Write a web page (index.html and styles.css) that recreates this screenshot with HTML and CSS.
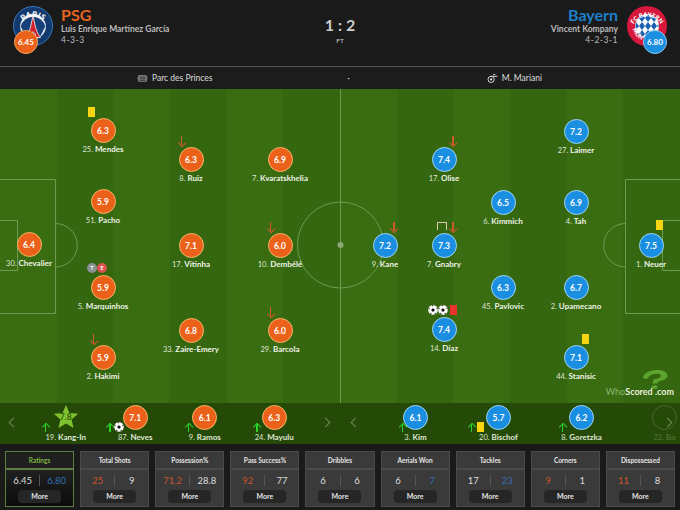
FILE: index.html
```html
<!DOCTYPE html>
<html lang="en">
<head>
<meta charset="utf-8">
<title>PSG 1 : 2 Bayern</title>
<link rel="stylesheet" href="styles.css">
</head>
<body>
<header class="match-head">
  <div class="team">
    <div class="crest">
      <svg viewBox="0 0 40 40" width="40" height="40">
        <defs><path id="psg-arc" d="M5.500 23A14.700 14.700 0 0 1 34.500 23"/></defs>
        <circle cx="20" cy="20" r="19.500" fill="#123a6e" stroke="#3a78b8"/>
        <circle cx="20" cy="20.500" r="12.500" fill="#f1f3f6" stroke="#cfd8e4"/>
        <path d="M7.800 20.500A12.500 12.500 0 0 1 32.200 20.500L27 31H13Z" fill="#16407a"/>
        <path d="M20 9.500L22 19C23 24 25 28 27.500 31.500H23C22.500 28 21.500 26 20 26S17.500 28 17 31.500H12.500C15 28 17 24 18 19Z" fill="#d2202f" stroke="#f4f4f4" stroke-width=".8"/>
        <text class="crest-text psg-text"><textPath href="#psg-arc" startOffset="50%">PARIS</textPath></text>
      </svg>
      <span class="team-rating home-bg home-rating">6.45</span>
    </div>
    <div class="team-info">
      <div class="team-name home-text">PSG</div>
      <div class="manager">Luis Enrique Martínez García</div>
      <div class="formation">4-3-3</div>
    </div>
  </div>
  <div class="score">
    <div class="score-value">1 : 2</div>
    <div class="score-state">FT</div>
  </div>
  <div class="team team-away">
    <div class="team-info info-away">
      <div class="team-name away-text">Bayern</div>
      <div class="manager">Vincent Kompany</div>
      <div class="formation">4-2-3-1</div>
    </div>
    <div class="crest">
      <svg viewBox="0 0 40 40" width="40" height="40">
        <defs>
          <path id="fcb-arc" d="M4.800 23A15.500 15.500 0 0 1 35.200 23"/>
          <path id="fcb-arc2" d="M5.500 22A15 15 0 0 0 20 35"/>
          <pattern id="lozenge" width="6" height="8" patternUnits="userSpaceOnUse">
            <rect width="6" height="8" fill="#fff"/>
            <path d="M3 0L6 4L3 8L0 4Z" fill="#1b5fb3"/>
          </pattern>
          <clipPath id="fcb-clip"><circle cx="20" cy="20" r="11.500"/></clipPath>
        </defs>
        <circle cx="20" cy="20" r="20" fill="#d7183c"/>
        <circle cx="20" cy="20" r="12" fill="#fff"/>
        <rect x="8" y="8" width="24" height="24" fill="url(#lozenge)" clip-path="url(#fcb-clip)"/>
        <text class="crest-text fcb-text"><textPath href="#fcb-arc" startOffset="50%">FC BAYERN</textPath></text>
        <text class="crest-text fcb-text"><textPath href="#fcb-arc2" startOffset="40%">MÜN</textPath></text>
      </svg>
      <span class="team-rating away-bg away-rating">6.80</span>
    </div>
  </div>
</header>

<div class="info-bar">
  <div class="info-item">
    <svg class="info-icon" viewBox="0 0 16 12" width="11" height="9"><rect x="1" y="1" width="14" height="10" rx="3" fill="#777"/><path d="M4 4h8M4 6.500h8M4 9h8" stroke="#222"/></svg>
    <span>Parc des Princes</span>
  </div>
  <span class="info-dot">·</span>
  <div class="info-item">
    <svg class="info-icon" viewBox="0 0 16 14" width="11" height="10"><circle cx="6" cy="9" r="4.500" fill="none" stroke="#ddd" stroke-width="1.400"/><circle cx="6" cy="9" r="1.600" fill="#ddd"/><path d="M6 4.500H15M9 2h3" stroke="#ddd" stroke-width="1.400"/></svg>
    <span>M. Mariani</span>
  </div>
</div>

<main class="pitch">
  <svg class="markings" viewBox="0 0 680 314" width="680" height="314">
    <g fill="none" stroke="#6f9a52" stroke-width="1">
      <path d="M340.500 0V314"/>
      <circle cx="340.500" cy="156" r="43"/>
      <path d="M0 90.500H55.500V224.500H0M0 131.500H17.500V181.500H0"/>
      <path d="M55.500 134.500A21.750 21.750 0 0 1 55.500 178"/>
      <path d="M680 90.500H625.500V224.500H680M680 131.500H662.500V181.500H680"/>
      <path d="M625.500 134.500A21.750 21.750 0 0 0 625.500 178"/>
    </g>
    <circle cx="340.500" cy="156" r="3" fill="#8aa873"/>
  </svg>

  <div class="player pl-1"><span class="card yellow card-top"></span><span class="bubble home-bg">6.3</span><span class="pname"><small>25.</small> Mendes</span></div>
  <div class="player pl-2"><span class="bubble home-bg">5.9</span><span class="pname"><small>51.</small> Pacho</span></div>
  <div class="player pl-3"><span class="bubble home-bg">6.4</span><span class="pname"><small>30.</small> Chevalier</span></div>
  <div class="player pl-4"><span class="badges"><i class="badge grey">T</i><i class="badge red">E</i></span><span class="bubble home-bg">5.9</span><span class="pname"><small>5.</small> Marquinhos</span></div>
  <div class="player pl-5"><span class="arrow-down arrow-top"></span><span class="bubble home-bg">5.9</span><span class="pname"><small>2.</small> Hakimi</span></div>
  <div class="player pl-6"><span class="arrow-down arrow-top"></span><span class="bubble home-bg">6.3</span><span class="pname"><small>8.</small> Ruiz</span></div>
  <div class="player pl-7"><span class="bubble home-bg">7.1</span><span class="pname"><small>17.</small> Vitinha</span></div>
  <div class="player pl-8"><span class="bubble home-bg">6.8</span><span class="pname"><small>33.</small> Zaire-Emery</span></div>
  <div class="player pl-9"><span class="bubble home-bg">6.9</span><span class="pname"><small>7.</small> Kvaratskhelia</span></div>
  <div class="player pl-10"><span class="arrow-down arrow-top"></span><span class="bubble home-bg">6.0</span><span class="pname"><small>10.</small> Dembélé</span></div>
  <div class="player pl-11"><span class="arrow-down arrow-top"></span><span class="bubble home-bg">6.0</span><span class="pname"><small>29.</small> Barcola</span></div>

  <div class="player pl-12"><span class="arrow-down arrow-top arrow-right"></span><span class="bubble away-bg">7.2</span><span class="pname"><small>9.</small> Kane</span></div>
  <div class="player pl-13"><span class="post"></span><span class="arrow-down arrow-top arrow-right"></span><span class="bubble away-bg">7.3</span><span class="pname"><small>7.</small> Gnabry</span></div>
  <div class="player pl-14"><span class="arrow-down arrow-top arrow-right"></span><span class="bubble away-bg">7.4</span><span class="pname"><small>17.</small> Olise</span></div>
  <div class="player pl-15"><span class="events"><svg class="ball" viewBox="0 0 10 10" width="10" height="10"><use href="#ball"/></svg><svg class="ball" viewBox="0 0 10 10" width="10" height="10"><use href="#ball"/></svg><span class="card red-card"></span></span><span class="bubble away-bg">7.4</span><span class="pname"><small>14.</small> Díaz</span></div>
  <div class="player pl-16"><span class="bubble away-bg">6.5</span><span class="pname"><small>6.</small> Kimmich</span></div>
  <div class="player pl-17"><span class="bubble away-bg">6.3</span><span class="pname"><small>45.</small> Pavlovic</span></div>
  <div class="player pl-18"><span class="bubble away-bg">7.2</span><span class="pname"><small>27.</small> Laimer</span></div>
  <div class="player pl-19"><span class="bubble away-bg">6.9</span><span class="pname"><small>4.</small> Tah</span></div>
  <div class="player pl-20"><span class="bubble away-bg">6.7</span><span class="pname"><small>2.</small> Upamecano</span></div>
  <div class="player pl-21"><span class="card yellow card-top card-top-right"></span><span class="bubble away-bg">7.1</span><span class="pname"><small>44.</small> Stanisic</span></div>
  <div class="player pl-22"><span class="card yellow card-right"></span><span class="bubble away-bg">7.5</span><span class="pname"><small>1.</small> Neuer</span></div>

  <div class="watermark">
    <svg class="wm-q" viewBox="0 0 26 19" width="26" height="19"><path d="M1 7C3 2 9 0 15 0C21 0 25.500 2 25.500 5.500C25.500 9 21 10.500 16.500 11.500L15 13.500H10.500L11.500 9.500C15 9 19 8 19 5.800C19 4 16.500 3.500 14 3.800C10 4.200 7 6 5.500 8.500C3 9 .5 8.500 1 7Z" fill="#5fa32f"/><ellipse cx="12.500" cy="17" rx="3" ry="1.800" fill="#5fa32f"/></svg>
    <span class="wm-text"><span class="wm-who">Who</span>Scored .com</span>
  </div>
</main>

<svg class="defs" width="0" height="0"><defs>
  <g id="ball"><circle cx="5" cy="5" r="4.800" fill="#fff"/><path d="M5 3.200l1.700 1.200-.6 2H3.900l-.6-2z" fill="#111"/><path d="M5 .3V1.600L3.500.6zM9.600 3.700L8.300 4.200 8.700 2.500zM.4 3.700L1.700 4.200 1.300 2.500zM2 8.700l.8-1.300 1 1.900zM8 8.700l-.8-1.300-1 1.900z" fill="#111"/></g>
</defs></svg>

<section class="subs">
  <span class="chev chev-left"></span>
  <div class="sub-group sub-home">
    <div class="sub"><span class="up up-star"></span><svg class="star" viewBox="0 0 26 26" width="26" height="26"><path d="M13 0l3.600 8.400 9 .8-6.800 6 2 8.800L13 19.300 5.200 24l2-8.800-6.800-6 9-.8z" fill="#7fc32e"/></svg><span class="star-val">7.8</span><span class="sub-name"><small>19.</small> Kang-In</span></div>
    <div class="sub"><span class="up up-ball"></span><svg class="ball sub-ball" viewBox="0 0 10 10" width="10" height="10"><use href="#ball"/></svg><span class="bubble home-bg">7.1</span><span class="sub-name"><small>87.</small> Neves</span></div>
    <div class="sub"><span class="up up-ramos"></span><span class="bubble home-bg">6.1</span><span class="sub-name"><small>9.</small> Ramos</span></div>
    <div class="sub"><span class="up up-mayulu"></span><span class="bubble home-bg">6.3</span><span class="sub-name"><small>24.</small> Mayulu</span></div>
  </div>
  <span class="chev chev-right"></span>
  <span class="chev chev-left chev-mid"></span>
  <div class="sub-group sub-away">
    <div class="sub"><span class="up up-kim"></span><span class="bubble away-bg">6.1</span><span class="sub-name"><small>3.</small> Kim</span></div>
    <div class="sub"><span class="up up-card"></span><span class="card yellow sub-card"></span><span class="bubble away-bg">5.7</span><span class="sub-name"><small>20.</small> Bischof</span></div>
    <div class="sub"><span class="up up-gor"></span><span class="bubble away-bg">6.2</span><span class="sub-name"><small>8.</small> Goretzka</span></div>
    <div class="sub sub-faded"><span class="bubble ghost"></span><span class="sub-name"><small>22.</small> Bo</span></div>
  </div>
  <span class="chev chev-right chev-end"></span>
</section>

<section class="stats">
  <div class="stat stat-active"><h3>Ratings</h3><div class="vals"><span>6.45</span><span class="away-text">6.80</span></div><button class="more">More</button></div>
  <div class="stat"><h3>Total Shots</h3><div class="vals"><span class="home-text">25</span><span>9</span></div><button class="more">More</button></div>
  <div class="stat"><h3>Possession%</h3><div class="vals"><span class="home-text">71.2</span><span>28.8</span></div><button class="more">More</button></div>
  <div class="stat"><h3>Pass Success%</h3><div class="vals"><span class="home-text">92</span><span>77</span></div><button class="more">More</button></div>
  <div class="stat"><h3>Dribbles</h3><div class="vals"><span>6</span><span>6</span></div><button class="more">More</button></div>
  <div class="stat"><h3>Aerials Won</h3><div class="vals"><span>6</span><span class="away-text">7</span></div><button class="more">More</button></div>
  <div class="stat"><h3>Tackles</h3><div class="vals"><span>17</span><span class="away-text">23</span></div><button class="more">More</button></div>
  <div class="stat"><h3>Corners</h3><div class="vals"><span class="home-text">9</span><span>1</span></div><button class="more">More</button></div>
  <div class="stat"><h3>Dispossessed</h3><div class="vals"><span class="home-text">11</span><span>8</span></div><button class="more">More</button></div>
</section>
</body>
</html>
```
FILE: styles.css
```css
* { box-sizing: border-box; }
html, body { margin: 0; padding: 0; }
body {
  width: 680px; height: 510px; overflow: hidden;
  background: #1a1a1a; color: #ddd;
  font-family: Lato, "Open Sans", sans-serif;
}
.home-text { color: #e8641f; }
.away-text { color: #1c7fc9; }
.home-bg { background: #ec6119; }
.away-bg { background: #1a8ee0; }

/* header */
.match-head {
  height: 67px; padding: 5px 13px 0;
  display: flex; justify-content: space-between; align-items: flex-start;
  border-bottom: 1px solid #555; position: relative;
}
.team { display: flex; gap: 8px; width: 200px; }
.team-away { justify-content: flex-end; gap: 9px; }
.crest { position: relative; width: 40px; height: 40px; flex: none; margin-top: 1px; }
.crest-text { fill: #fff; text-anchor: middle; font-weight: 900; }
.psg-text { font-size: 7.500px; letter-spacing: .3px; }
.fcb-text { font-size: 6px; }
.team-rating {
  position: absolute; width: 24px; height: 24px; border-radius: 50%;
  border: 1px solid #eaa05e; color: #fff; font-size: 8px; font-weight: 700;
  display: flex; align-items: center; justify-content: center;
}
.home-rating { left: 1px; top: 24px; }
.away-rating { right: 0; top: 24px; border-color: #8cc8ee; }
.team-info { font-size: 8.500px; color: #bbb; font-weight: 700; }
.info-away { text-align: right; }
.team-name { font-size: 16px; font-weight: 700; line-height: 20px; }
.manager { line-height: 11px; margin-top: -1px; }
.formation { line-height: 11px; font-weight: 400; letter-spacing: .5px; }
.score { text-align: center; padding-top: 10px; }
.score-value { font-size: 16px; font-weight: 700; line-height: 20px; color: #ccc; }
.score-state { font-size: 6.500px; line-height: 9px; margin-top: 1px; color: #ccc; }

/* venue */
.info-bar {
  height: 22px; display: flex; align-items: center; padding-left: 137px;
  font-size: 8.500px; color: #ddd; background: #1c1c1c;
}
.info-item { display: flex; align-items: center; gap: 4px; }
.info-dot { margin-left: 135px; margin-right: 137px; }

/* pitch */
.pitch {
  position: relative; height: 314px; overflow: hidden;
  background: repeating-linear-gradient(90deg, #3a6c12 0 56.670px, #356610 56.670px 113.340px);
}
.markings { position: absolute; left: 0; top: 0; }
.player {
  position: absolute; width: 80px; margin-left: -40px;
  display: flex; flex-direction: column; align-items: center;
}
.pl-1 { left: 103px; top: 29px; }
.pl-2 { left: 103px; top: 100px; }
.pl-3 { left: 29px; top: 143px; }
.pl-4 { left: 103px; top: 186px; }
.pl-5 { left: 103px; top: 256px; }
.pl-6 { left: 191px; top: 58px; }
.pl-7 { left: 191px; top: 144px; }
.pl-8 { left: 191px; top: 229px; }
.pl-9 { left: 280px; top: 58px; }
.pl-10 { left: 280px; top: 144px; }
.pl-11 { left: 280px; top: 229px; }
.pl-12 { left: 385px; top: 144px; }
.pl-13 { left: 444px; top: 144px; }
.pl-14 { left: 444px; top: 58px; }
.pl-15 { left: 444px; top: 228px; }
.pl-16 { left: 503px; top: 101px; }
.pl-17 { left: 503px; top: 186px; }
.pl-18 { left: 576px; top: 30px; }
.pl-19 { left: 576px; top: 101px; }
.pl-20 { left: 576px; top: 186px; }
.pl-21 { left: 576px; top: 256px; }
.pl-22 { left: 651px; top: 144px; }
.bubble {
  width: 25px; height: 25px; border-radius: 50%;
  border: 1px solid #f2b767; color: #fff; font-size: 8.500px; font-weight: 700;
  display: flex; align-items: center; justify-content: center; flex: none;
}
.away-bg.bubble { border-color: #9fd6f5; }
.pname {
  font-size: 8px; line-height: 11px; margin-top: 1px; color: #eef3e6;
  font-weight: 700; white-space: nowrap;
}
.pname small, .sub-name small { font-size: 7.500px; font-weight: 400; color: #dfe6d4; }
.card { position: absolute; width: 7px; height: 10px; }
.yellow { background: #f7d512; }
.card-top { top: -11px; left: 25px; }
.card-top-right { left: 46px; }
.card-right { top: -13px; left: 45px; }
.red-card { position: static; display: block; background: #e8342c; width: 7px; height: 10px; margin-left: 2px; }
.arrow-down { position: absolute; width: 7px; height: 10px; }
.arrow-down::before {
  content: ""; position: absolute; left: 2.700px; top: 0; width: 1.600px; height: 9px; background: #cf5a2a;
}
.arrow-down::after {
  content: ""; position: absolute; left: .8px; top: 4px; width: 5.400px; height: 5.400px;
  border-right: 1.300px solid #cf5a2a; border-bottom: 1.300px solid #cf5a2a; transform: rotate(45deg);
}
.arrow-top { top: -11px; left: 27px; }
.arrow-right { left: 45.500px; }
.post {
  position: absolute; top: -11px; left: 33px; width: 10px; height: 8px;
  border: 1.500px solid #d8c8b0; border-bottom: 0;
}
.badges { position: absolute; top: -12px; left: 24px; display: flex; gap: 0; }
.badge {
  width: 10px; height: 10px; border-radius: 50%; font-style: normal; color: #fff;
  font-size: 5.500px; font-weight: 700; display: flex; align-items: center; justify-content: center;
}
.grey { background: #8a8f90; }
.red { background: #d9534f; }
.events { position: absolute; top: -12px; left: 24px; display: flex; align-items: center; gap: 0; }
.ball { display: block; }
.watermark { position: absolute; right: 6px; bottom: 6px; width: 68px; height: 27px; text-align: right; }
.wm-q { position: absolute; right: 6px; top: 0; }
.wm-text { position: absolute; right: 0; bottom: 0; font-size: 9px; line-height: 11px; color: #e8f0dc; font-weight: 700; white-space: nowrap; }
.wm-who { color: #8fb86f; font-weight: 400; }

/* subs */
.subs {
  height: 41px; display: flex; align-items: flex-start; overflow: hidden;
  background: #254a07; position: relative; padding-left: 31px;
}
.sub-group { display: flex; flex: none; }
.sub-home { width: 278px; }
.sub-away { width: 332px; margin-left: 65px; }
.sub-home .sub { width: 69.500px; }
.sub-away .sub { width: 83px; }
.sub {
  position: relative; display: flex; flex-direction: column; align-items: center;
  padding-top: 2px; flex: none;
}
.sub-name {
  font-size: 8px; line-height: 11px; margin-top: 2px; white-space: nowrap; color: #dfe6d4; font-weight: 700;
}
.star { display: block; height: 25px; }
.star-val { position: absolute; top: 9px; font-size: 8.500px; font-weight: 700; color: #35610f; }
.up { position: absolute; left: 10px; top: 20px; width: 7px; height: 9px; }
.up::before { content: ""; position: absolute; left: 2.700px; top: 1px; width: 1.600px; height: 8px; background: #2bd42b; }
.up::after {
  content: ""; position: absolute; left: .8px; top: 1px; width: 5.400px; height: 5.400px;
  border-left: 1.300px solid #2bd42b; border-top: 1.300px solid #2bd42b; transform: rotate(45deg);
}
.up-star { left: 11px; }
.up-ball { left: 6px; }
.sub-ball { position: absolute; left: 13px; top: 19px; }
.up-ramos { left: 15px; }
.up-mayulu { left: 14px; }
.sub-away .up-kim { left: 25px; }
.sub-away .up-card { left: 11px; }
.sub-away .up-gor { left: 19px; }
.sub-card { left: 20px; top: 19px; }
.sub-faded { opacity: .22; }
.ghost { background: transparent; border-color: #ccc; }
.chev { position: absolute; width: 7px; height: 7px; top: 16px; border-left: 1.500px solid #6f8a58; border-bottom: 1.500px solid #6f8a58; }
.chev-left { left: 10px; transform: rotate(45deg); }
.chev-right { left: 322px; transform: rotate(225deg); }
.chev-mid { left: 352px; }
.chev-end { left: 664px; }

/* stats */
.stats {
  height: 66px; padding: 7px 5px 3px;
  display: grid; grid-template-columns: repeat(9, 1fr); column-gap: 6px;
}
.stats .home-text { color: #c9542a; }
.stats .away-text { color: #2f6fb5; }
.stat {
  background: #3a3a3a; border: 1px solid #4a4a4a;
  display: flex; flex-direction: column; align-items: center;
}
.stat h3 {
  margin: 0; width: 100%; height: 18px; font-size: 6.500px; line-height: 17px;
  text-align: center; font-weight: 700; color: #e4e4e4; border-bottom: 2px solid #4a4a4a;
}
.vals { display: flex; width: 100%; height: 20px; align-items: center; font-size: 9.500px; font-weight: 400; color: #ddd; }
.vals span { flex: 1; text-align: center; }
.vals span + span { border-left: 1px solid #555; line-height: 11px; }
.more {
  width: 43px; height: 13px; border: 0; border-radius: 4px; padding: 0;
  background: #262626; color: #e4e4e4; font: 700 7px/13px Lato, sans-serif;
}
.stat-active { background: linear-gradient(#2a2a2a, #0c0c0c); border-color: #5d7d41; }
.stat-active h3 { background: #1f1f1f; color: #7fb23e; border-bottom-color: #5d7d41; }
.stat-active .vals span + span { border-left-color: #555; }
.defs { position: absolute; }
```
